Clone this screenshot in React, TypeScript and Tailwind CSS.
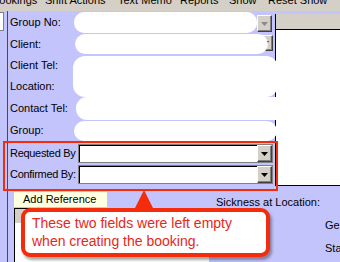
import React from "react";

const LAVENDER = "bg-[#c4c4fc]";

function DropButton({ disabled = false }: { disabled?: boolean }) {
  return (
    <div className="flex h-full w-[15px] shrink-0 items-center justify-center border border-t-white border-l-white border-b-[#404040] border-r-[#404040] bg-[#d4d0c8] shadow-[inset_-1px_-1px_0_#808080]">
      <svg width="7" height="4" viewBox="0 0 7 4">
        <polygon points="0,0 7,0 3.5,4" fill={disabled ? "#8a8a8a" : "#000"} />
      </svg>
    </div>
  );
}

// the white pills are the redactions painted over the client details
function Blob({ className }: { className: string }) {
  return <div className={`relative z-10 shrink-0 bg-white ${className}`} />;
}

function ComboRow({ label }: { label: string }) {
  return (
    <div className="flex h-[19px] items-center">
      <span className="w-[68px] shrink-0 whitespace-nowrap tracking-[-0.3px]">{label}</span>
      <div className="relative z-10 flex h-full w-[195px] justify-end border border-[#808080] bg-white shadow-[inset_1px_1px_0_#000]">
        <DropButton />
      </div>
    </div>
  );
}

export default function App() {
  return (
    <div
      className={`relative h-[262px] w-[340px] overflow-hidden ${LAVENDER} font-['Liberation_Sans',Arial,sans-serif] text-[11px] text-black`}
    >
      {/* menu bar, scrolled half out of the shot */}
      <div className="h-[11px] overflow-hidden bg-[#d4d0c8]">
        <div className="-mt-[6px] flex whitespace-nowrap leading-[13px]">
          <span className="-ml-[8px] w-[53px] shrink-0">Bookings</span>
          <span className="w-[73px] shrink-0">Shift Actions</span>
          <span className="w-[62px] shrink-0">Text Memo</span>
          <span className="w-[49px] shrink-0">Reports</span>
          <span className="w-[39px] shrink-0">Show</span>
          <span className="shrink-0">Reset Show</span>
        </div>
      </div>

      <div className="flex h-[251px]">
        {/* left edge of the neighbouring pane */}
        <div className="w-[8px] shrink-0 border-r border-[#4a4a4a] pt-[1px]">
          <div className="h-[19px] w-[4px] border-y border-r border-[#808080] bg-white" />
        </div>

        <div className="flex flex-1 flex-col">
          {/* booking form + side list */}
          <div className="flex h-[179px]">
            <div className="flex w-[267px] shrink-0 flex-col pl-[2px] pt-[1px]">
              <div className="flex h-[21px] items-center">
                <span className="w-[64px] shrink-0">Group No:</span>
                <Blob className="h-[21px] w-[183px] rounded-[10px]" />
                <div className="h-[17px] self-start mt-[3px]">
                  <DropButton disabled />
                </div>
              </div>

              <div className="flex h-[22px] items-center">
                <span className="w-[65px] shrink-0">Client:</span>
                <Blob className="h-[20px] w-[193px] rounded-[10px]" />
                <div className="-ml-[10px] h-[16px] self-start mt-[2px]">
                  <DropButton />
                </div>
              </div>

              <div className="flex h-[42px]">
                <div className="flex w-[63px] shrink-0 flex-col">
                  <span className="flex h-[21px] items-center">Client Tel:</span>
                  <span className="flex h-[21px] items-center">Location:</span>
                </div>
                <Blob className="mt-[1px] h-[41px] w-[205px] rounded-[12px]" />
              </div>

              <div className="flex h-[23px] items-center">
                <span className="w-[66px] shrink-0">Contact Tel:</span>
                <Blob className="h-[23px] w-[214px] rounded-[11px]" />
              </div>

              <div className="flex h-[21px] items-center">
                <span className="w-[64px] shrink-0">Group:</span>
                <Blob className="h-[20px] w-[203px] rounded-[10px]" />
              </div>

              <div className="mt-[3px] flex flex-col gap-[2px]">
                <ComboRow label="Requested By" />
                <ComboRow label="Confirmed By:" />
              </div>
            </div>

            <div className="mt-[3px] flex h-[172px] flex-1 flex-col border-b border-l border-black bg-white">
              <div className="h-[16px] border-b border-black bg-[#d4d0c8]" />
            </div>
          </div>

          {/* lower part */}
          <div className="flex flex-1">
            <div className="ml-[6px] flex w-[195px] shrink-0 flex-col">
              <div className="mt-[2px] h-[15px] w-[93px] bg-[#ffffe1] pl-[9px] leading-[15px]">
                Add Reference
              </div>
              <div className="mt-[1px] flex-1 border-l border-t border-black bg-white">
                <div className="h-[14px] bg-[#d4d0c8]" />
              </div>
            </div>
            <div className="ml-[7px] flex flex-col whitespace-nowrap leading-[13px]">
              <span className="mt-[6px]">Sickness at Location:</span>
              <span className="ml-[109px] mt-[10px]">Gender:</span>
              <span className="ml-[109px] mt-[10px]">Status:</span>
            </div>
          </div>
        </div>
      </div>

      {/* annotation: highlight + callout */}
      <div className="absolute left-[3px] top-[141px] h-[50px] w-[275px] border-2 border-[#f52c0c]" />
      <svg
        className="absolute left-[133px] top-[189px]"
        width="22"
        height="21"
        viewBox="0 0 22 21"
      >
        <polygon points="11,1 1,21 21,21" fill="#f52c0c" />
      </svg>
      <div className="absolute left-[21px] top-[208px] h-[49px] w-[249px] rounded-[9px] border-4 border-[#f52c0c] bg-white px-[7px] pt-[2px] text-[14px] leading-[18px] text-[#e8261a] shadow-[2px_3px_3px_rgba(0,0,0,0.35)]">
        <p>These two fields were left empty</p>
        <p>when creating the booking.</p>
      </div>
    </div>
  );
}
